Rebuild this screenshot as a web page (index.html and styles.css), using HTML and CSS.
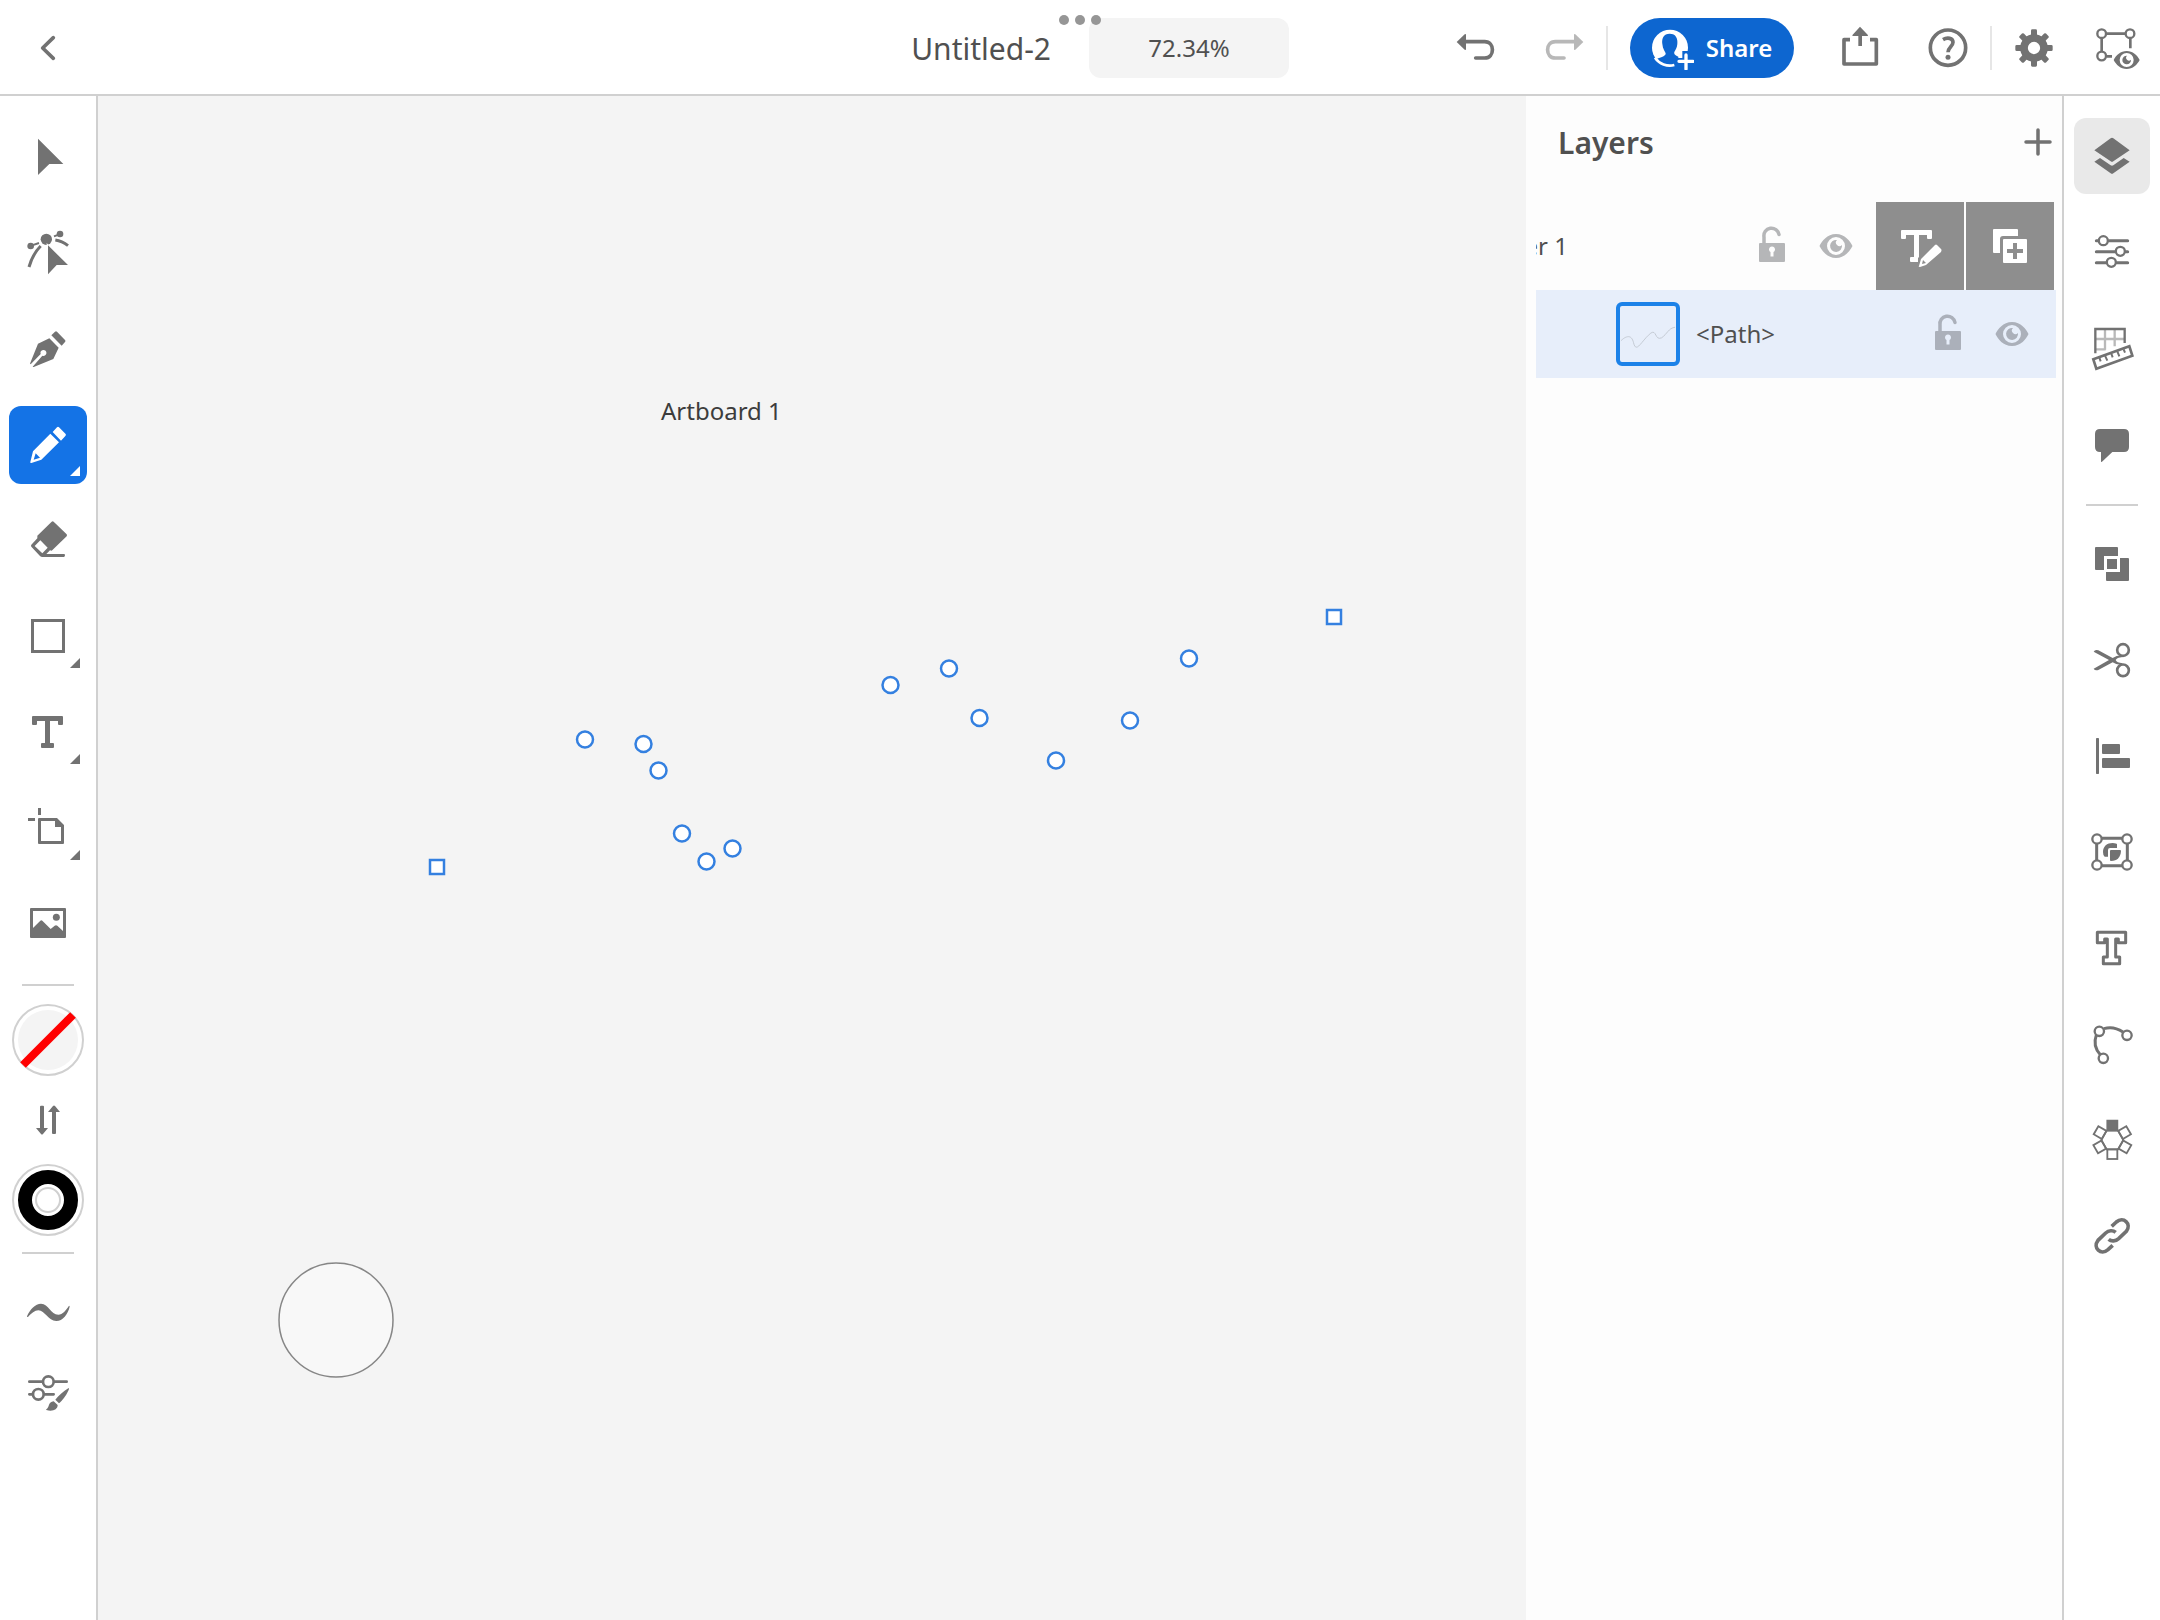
FILE: index.html
```html
<!DOCTYPE html>
<html lang="en">
<head>
<meta charset="utf-8">
<title>Untitled-2</title>
<meta name="viewport" content="width=device-width, initial-scale=1">
<link rel="stylesheet" href="styles.css">
</head>
<body>
<svg class="defs" aria-hidden="true">
  <symbol id="lock" viewBox="-24 -24 48 48">
    <path d="M-8-2V-9A7.500 7.500 0 0 1 7-11.500" fill="none" stroke="currentColor" stroke-width="3.500" stroke-linecap="round"/>
    <path fill="currentColor" fill-rule="evenodd" d="M-12-3H12Q13-3 13-2V15Q13 16 12 16H-12Q-13 16-13 15V-2Q-13-3-12-3ZM-1.500 6V10.500H1.500V6A3 3 0 1 0-1.500 6Z"/>
  </symbol>
  <symbol id="eye" viewBox="-24 -24 48 48">
    <path fill="currentColor" fill-rule="evenodd" d="M0-12C9-12 14-5 16.500 0C14 5 9 12 0 12C-9 12-14 5-16.500 0C-14-5-9-12 0-12ZM0-9A9 9 0 1 0 0 9A9 9 0 1 0 0-9Z"/>
    <path fill="currentColor" d="M1-6A6 6 0 1 0 6-1A3.200 3.200 0 1 1 1-6Z"/>
  </symbol>
</svg>

<div class="app">
  <header class="topbar">
    <div class="topbar-start">
      <button class="icon-btn back" aria-label="Back"><svg class="icon" viewBox="72 72 144 144"><path d="M160 113L128 144L160 175" class="line" stroke-width="11" stroke-linecap="round" stroke-linejoin="round"/></svg></button>
      <h1 class="doc-title">Untitled-2</h1>
    </div>
    <div class="topbar-end">
      <button class="zoom-level">72.34%</button>
      <div class="actions">
        <button class="icon-btn" aria-label="Undo"><svg class="icon" viewBox="69 72 144 144"><path class="line" stroke-width="11" stroke-linecap="round" d="M104 125H164C195 125 195 174 164 174H137"/><path d="M80 126L104 103Q108 101 108 105V147Q108 151 104 149Z"/></svg></button>
        <button class="icon-btn faded" aria-label="Redo" disabled><svg class="icon" viewBox="327 72 144 144"><path class="line" stroke-width="11" stroke-linecap="round" d="M436 125H376C345 125 345 174 376 174H402"/><path d="M460 126L436 103Q432 101 432 105V147Q432 151 436 149Z"/></svg></button>
        <span class="bar"></span>
        <button class="share">
          <svg class="share-icon" viewBox="666 78 126 132">
            <circle cx="720" cy="143" r="54" fill="#fff"/>
            <path class="share-cut" d="M719 101C738 101 744 116 742 132C741 144 736 150 733 156C731 163 737 167 745 170V210H666V182C690 172 708 170 707 160C705 154 698 146 697 132C695 115 701 101 719 101Z"/>
            <path d="M675 173A54 54 0 0 0 733 195" fill="none" stroke="#fff" stroke-width="8"/>
            <path class="share-cut" d="M757 153H778V174H800V195H778V216H756V195H735V174H757Z"/>
            <path d="M768 165V207M747 184H789" stroke="#fff" stroke-width="10" stroke-linecap="round"/>
          </svg>
          <span>Share</span>
        </button>
        <button class="icon-btn" aria-label="Export"><svg class="icon" viewBox="81 72 144 144"><path class="line" stroke-width="11" stroke-linejoin="round" d="M120 119H102V192H199V119H180"/><path d="M150 80L173 104Q176 108 172 108H156V138H145V108H129Q125 108 128 104Z"/></svg></button>
        <button class="icon-btn" aria-label="Help"><svg class="icon" viewBox="339 72 144 144"><circle cx="414" cy="143" r="53" class="line" stroke-width="11"/><path class="line" stroke-width="11" d="M399 119C412 111 429 114 429 127C429 139 414 142 414 157"/><circle cx="414" cy="172" r="7.500"/></svg></button>
        <span class="bar"></span>
        <button class="icon-btn narrow" aria-label="Settings"><svg class="icon" viewBox="600 72 144 144"><g transform="translate(672 144)"><circle r="30" class="line" stroke-width="23"/><path id="teeth" d="M-9-36V-52Q-9-56-5-56H5Q9-56 9-52V-36ZM-9 36V52Q-9 56-5 56H5Q9 56 9 52V36ZM-36-9H-52Q-56-9-56-5V5Q-56 9-52 9H-36ZM36-9H52Q56-9 56-5V5Q56 9 52 9H36Z"/><use href="#teeth" transform="rotate(45)"/></g></svg></button>
        <button class="icon-btn narrow" aria-label="View mode"><svg class="icon" viewBox="852 72 144 144"><path class="line" stroke-width="8" d="M890 101H946M875 116V153M961 116V145M890 169H906"/><g class="line" stroke-width="7"><circle cx="875" cy="101" r="13"/><circle cx="960" cy="101" r="13"/><circle cx="875" cy="168" r="13"/></g><path fill-rule="evenodd" d="M950 153C968 153 982 166 989 180C982 194 968 207 950 207C932 207 918 194 911 180C918 166 932 153 950 153ZM950 159A21 21 0 1 0 950 201A21 21 0 1 0 950 159Z"/><path d="M951 167A13 13 0 1 0 963 179A7 7 0 1 1 951 167Z"/></svg></button>
      </div>
    </div>
    <div class="grabber" aria-hidden="true"><i></i><i></i><i></i></div>
  </header>

  <nav class="rail tools" aria-label="Tools">
    <button class="tool" aria-label="Selection"><svg class="icon" viewBox="72 399 144 144"><path d="M114 416L190 492H148L114 525Z"/></svg></button>
    <button class="tool" aria-label="Direct selection"><svg class="icon" viewBox="72 687 144 144"><circle cx="139" cy="718" r="17"/><circle cx="92" cy="738" r="10"/><circle cx="180" cy="702" r="10"/><path class="line" stroke-width="6" d="M96 736L117 729M162 709L178 703"/><path class="line" stroke-width="9" d="M122 738Q98 762 87 801M166 720Q186 723 204 737"/><path d="M140 729L208 796H171L140 828Z" fill="#fff"/><path d="M144 736L204 795H170L144 823Z"/></svg></button>
    <button class="tool" aria-label="Pen"><svg class="icon" viewBox="72 975 144 144"><path d="M165 995Q168 992 171 995L195 1020Q198 1023 195 1026L185 1037L154 1006Z"/><path d="M148 1015L176 1043L160 1077L103 1100Q100 1102 98 1100L127 1067A9 9 0 1 0 122 1062L92 1093Q89 1091 91 1088L114 1031Z"/></svg></button>
    <button class="tool flyout active" aria-label="Pencil" aria-pressed="true"><svg class="icon" viewBox="72 1263 144 144"><path d="M171 1282Q174 1279 177 1282L197 1302Q199 1305 196 1308L183 1322L158 1296Z"/><path fill-rule="evenodd" d="M151 1301L177 1327L124 1379L94 1389Q90 1390 91 1386L99 1354ZM107 1360L101 1379L120 1373Z"/></svg></button>
    <button class="tool" aria-label="Eraser"><svg class="icon" viewBox="72 81 144 144"><path fill-rule="evenodd" d="M155 95Q158 92 161 95L200 133Q202 136 200 139L155 182L150 181L139 192H192Q195 192 195 196Q195 201 191 201H127Q123 201 120 198L94 170Q92 167 94 164L112 145V137ZM121 151L104 168L127 190L143 173Z"/></svg></button>
    <button class="tool flyout" aria-label="Rectangle"><svg class="icon" viewBox="72 369 144 144"><rect x="97.500" y="391.500" width="93" height="93" class="line" stroke-width="9"/></svg></button>
    <button class="tool flyout" aria-label="Type"><svg class="icon" viewBox="72 657 144 144"><path d="M99 678H186Q189 678 189 681V702Q189 705 186 705H177Q174 705 174 702V693H150V759H159Q162 759 162 762V771Q162 774 159 774H126Q123 774 123 771V762Q123 759 126 759H135V693H111V702Q111 705 108 705H99Q96 705 96 702V681Q96 678 99 678Z"/></svg></button>
    <button class="tool flyout" aria-label="Artboard"><svg class="icon" viewBox="72 945 144 144"><path d="M114 954H123V975H114ZM84 984H105V993H84Z"/><path fill-rule="evenodd" d="M117 984H171L192 1005V1058Q192 1062 189 1062H117Q114 1062 114 1059V987Q114 984 117 984ZM123 993V1053H183V1011H165V993Z"/></svg></button>
    <button class="tool" aria-label="Place image"><svg class="icon" viewBox="72 1233 144 144"><path fill-rule="evenodd" d="M93 1254H195Q198 1254 198 1257V1341Q198 1344 195 1344H93Q90 1344 90 1341V1257Q90 1254 93 1254ZM99 1263V1314L121 1292Q124 1289 127 1292L152 1317L164 1307Q168 1304 172 1307L189 1323V1263Z"/><circle cx="169" cy="1282" r="10.500"/></svg></button>
    <hr class="rule first">
    <button class="swatch" aria-label="Fill: none"><svg viewBox="0 0 72 72"><circle cx="36" cy="36" r="35" fill="#fff" stroke="#d0d0d0" stroke-width="2"/><circle cx="36" cy="36" r="30" fill="#f4f4f4"/><path d="M11 61L61 11" stroke="#f00" stroke-width="8"/></svg></button>
    <button class="swap" aria-label="Swap fill and stroke"><svg class="icon" viewBox="72 408 144 144"><path d="M120 440Q120 437 123 437H129Q132 437 132 440V504H144L129 522Q126 525 123 522L108 504H120ZM156 519Q156 522 159 522H165Q168 522 168 519V456H180L165 438Q162 435 159 438L144 456H156Z"/></svg></button>
    <button class="swatch" aria-label="Stroke: black"><svg viewBox="0 0 72 72"><circle cx="36" cy="36" r="35" fill="#fff" stroke="#d0d0d0" stroke-width="2"/><circle cx="36" cy="36" r="23" fill="#fff" stroke="#000" stroke-width="14"/><circle cx="36" cy="36" r="12" fill="#fff" stroke="#d0d0d0" stroke-width="2"/></svg></button>
    <hr class="rule second">
    <button class="option" aria-label="Smoothing"><svg class="icon" viewBox="72 984 144 144"><path d="M81 1069C90 1048 106 1031 123 1031C146 1031 152 1064 175 1064C188 1064 198 1050 207 1037Q209 1037 209 1040C204 1062 188 1083 169 1083C144 1083 135 1051 115 1051C104 1051 95 1060 84 1071Q81 1072 81 1069Z"/></svg></button>
    <button class="option" aria-label="Brush settings"><svg class="icon" viewBox="72 1224 144 144"><path class="line" stroke-width="8" stroke-linecap="round" d="M88 1265H127M163 1265H200M88 1303H97M133 1303H161"/><g class="line" stroke-width="8"><circle cx="145" cy="1265" r="16"/><circle cx="115" cy="1303" r="16"/></g><path d="M206 1284Q208 1285 206 1290C197 1310 187 1321 177 1330L166 1319C175 1307 189 1295 206 1284ZM161 1324L173 1335C173 1349 157 1356 139 1350Q137 1348 140 1347C148 1344 144 1325 161 1324Z"/></svg></button>
  </nav>

  <main class="canvas">
    <svg class="artwork" aria-label="Path anchors">
      <g fill="#fff" stroke="#3480e0" stroke-width="2.500">
        <rect x="332" y="764" width="14" height="14"/>
        <circle cx="487" cy="643.500" r="8"/><circle cx="545.500" cy="648" r="8"/><circle cx="560.500" cy="674.500" r="8"/>
        <circle cx="584" cy="737.500" r="8"/><circle cx="608.500" cy="765.500" r="8"/><circle cx="634.500" cy="752.500" r="8"/>
        <circle cx="792.500" cy="589" r="8"/><circle cx="851" cy="572.500" r="8"/><circle cx="881.500" cy="622" r="8"/>
        <circle cx="958" cy="664.500" r="8"/><circle cx="1032" cy="624.500" r="8"/><circle cx="1091" cy="562.500" r="8"/>
        <rect x="1229" y="514" width="14" height="14"/>
      </g>
      <circle cx="238" cy="1224" r="57" fill="#f8f8f8" stroke="#868686" stroke-width="1.500"/>
    </svg>
    <span class="artboard-label">Artboard 1</span>
  </main>

  <aside class="panel" aria-label="Layers">
    <div class="panel-head">
      <h2>Layers</h2>
      <button class="add" aria-label="Add layer"><svg viewBox="0 0 28 28"><path class="line" stroke-width="3.500" stroke-linecap="round" d="M14 2V26M2 14H26"/></svg></button>
    </div>
    <div class="layer swiped">
      <span class="layer-name clipped"><span>Layer 1</span></span>
      <button class="mini" aria-label="Lock layer"><svg class="icon"><use href="#lock"/></svg></button>
      <button class="mini" aria-label="Hide layer"><svg class="icon"><use href="#eye"/></svg></button>
      <div class="swipe-actions">
        <button aria-label="Rename"><svg class="icon" viewBox="-24 -24 48 48"><path d="M-19-16H11Q12-16 12-15V-8Q12-7 11-7H8Q7-7 7-8V-11H-1V11L-2 12V16H-9Q-10 16-10 15V12Q-10 11-9 11H-6V-11H-14V-8Q-14-7-15-7H-18Q-19-7-19-8V-15Q-19-16-18-16Z"/><path fill-rule="evenodd" d="M15-1Q16-2 17-1L21 3Q22 4 21 6L6 19L0 21Q-2 21-1 20L1 13ZM3 14L2 18L6 17Z"/></svg></button>
        <button aria-label="Duplicate"><svg class="icon" viewBox="-24 -24 48 48"><path d="M-16-17H7Q8-17 8-16V-10H-7Q-10-10-10-7V7H-16Q-17 7-17 6V-16Q-17-17-16-17Z"/><path fill-rule="evenodd" d="M-6-7H16Q17-7 17-6V16Q17 17 16 17H-6Q-7 17-7 16V-6Q-7-7-6-7ZM3-3V3H-3V7H3V13H7V7H13V3H7V-3Z"/></svg></button>
      </div>
    </div>
    <div class="layer selected">
      <span class="thumb"><svg viewBox="0 0 58 58"><path d="M1 36C6 31 12 29 14 38C17 50 22 36 32 28C38 24 36 36 43 33C49 29 50 23 57 22" fill="none" stroke="#c3c9d2"/></svg></span>
      <span class="layer-name">&lt;Path&gt;</span>
      <button class="mini" aria-label="Lock path"><svg class="icon"><use href="#lock"/></svg></button>
      <button class="mini" aria-label="Hide path"><svg class="icon"><use href="#eye"/></svg></button>
    </div>
  </aside>

  <nav class="rail panels" aria-label="Panels">
    <button class="tab active" aria-label="Layers" aria-pressed="true"><svg class="icon" viewBox="114 96 144 144"><path d="M182 115Q186 112 190 115L239 151L190 184Q186 187 182 184L133 151Z"/><path d="M133 185L150 174L182 196Q186 198 190 196L221 174L239 185L190 220Q186 223 182 220Z"/></svg></button>
    <button class="tab" aria-label="Properties"><svg class="icon" viewBox="114 384 144 144"><path class="line" stroke-width="9" stroke-linecap="round" d="M139 422H145M177 422H233M139 455H195M227 455H233M139 488H168M201 488H233"/><g class="line" stroke-width="7"><circle cx="160" cy="422" r="13.500"/><circle cx="211" cy="454" r="13.500"/><circle cx="184" cy="487" r="13.500"/></g></svg></button>
    <button class="tab" aria-label="Precision"><svg class="icon" viewBox="114 672 144 144"><path fill="none" stroke="#b9b9b9" stroke-width="7" d="M165 690V749M194 690V739M137 717H223M137 748H167"/><path class="line" stroke-width="7" d="M136 760V687H224V729"/><g class="line" stroke-width="8"><path d="M130 778L238 739L247 767L139 806Z"/><path stroke-width="6" d="M148 773L152 784M165 767L172 782M184 761L188 772M202 754L208 769M221 748L225 758"/></g></svg></button>
    <button class="tab" aria-label="Comments"><svg class="icon" viewBox="114 960 144 144"><path d="M150 987H222Q237 987 237 1002V1041Q237 1056 222 1056H187L156 1085Q153 1088 153 1084V1056H150Q135 1056 135 1041V1002Q135 987 150 987Z"/></svg></button>
    <hr class="rule">
    <button class="tab" aria-label="Combine shapes"><svg class="icon" viewBox="114 90 144 144"><path d="M138 111H201Q204 111 204 114V138H162V180H138Q135 180 135 177V114Q135 111 138 111ZM210 144H234Q237 144 237 147V210Q237 213 234 213H171Q168 213 168 210V186H210ZM171 147H201V177H171Z"/></svg></button>
    <button class="tab" aria-label="Edit"><svg class="icon" viewBox="114 378 144 144"><g class="line" stroke-width="8"><circle cx="219" cy="420" r="17.500"/><circle cx="219" cy="481" r="17.500"/></g><path d="M131 425Q135 417 145 421L188 444Q199 436 214 436L218 441Q200 443 197 450Q200 458 218 460L214 465Q199 465 188 457L145 480Q135 483 131 476L177 450Z"/></svg></button>
    <button class="tab" aria-label="Align"><svg class="icon" viewBox="114 666 144 144"><rect x="138" y="684" width="9" height="108" rx="2"/><rect x="156" y="702" width="54" height="30" rx="3"/><rect x="156" y="744" width="84" height="30" rx="3"/></svg></button>
    <button class="tab" aria-label="Object"><svg class="icon" viewBox="114 954 144 144"><path class="line" stroke-width="9" d="M155 985H217M155 1067H217M140 1000V1051M232 1000V1051"/><g class="line" stroke-width="7"><circle cx="141" cy="987" r="14"/><circle cx="231" cy="987" r="14"/><circle cx="141" cy="1065" r="14"/><circle cx="231" cy="1065" r="14"/></g><path d="M159 1026C159 1009 171 999 188 999Q200 1000 201 1003V1014H180Q174 1014 174 1020V1040H164Q159 1037 159 1026Z"/><path d="M183 1020H210Q213 1020 213 1023C212 1041 202 1053 183 1053Q180 1053 180 1050V1023Q180 1020 183 1020Z"/></svg></button>
    <button class="tab" aria-label="Type"><svg class="icon" viewBox="114 72 144 144"><path class="line" stroke-width="9" stroke-linejoin="round" d="M142 97H227V128H205V117H197V171H209V191H160V171H172V117H164V128H142Z"/></svg></button>
    <button class="tab" aria-label="Path"><svg class="icon" viewBox="114 360 144 144"><path class="line" stroke-width="9" d="M162 386Q190 377 219 396M139 405Q127 438 151 464"/><g class="line" stroke-width="7"><circle cx="148" cy="394" r="14"/><circle cx="231" cy="406" r="14"/><circle cx="160" cy="475" r="14"/></g></svg></button>
    <button class="tab" aria-label="Repeat"><svg class="icon" viewBox="114 648 144 144"><g transform="translate(187 720)" class="line" stroke-width="5.500"><path d="M-17-28H17L33 0L17 28H-17L-33 0Z"/><rect x="-15" y="-58" width="30" height="29" class="solid"/><rect x="-15" y="28" width="30" height="29"/><rect x="-15" y="-57" width="28" height="28" transform="rotate(60)"/><rect x="-15" y="-57" width="28" height="28" transform="rotate(120)"/><rect x="-13" y="-57" width="28" height="28" transform="rotate(240)"/><rect x="-13" y="-57" width="28" height="28" transform="rotate(300)"/></g></svg></button>
    <button class="tab" aria-label="Link"><svg class="icon" viewBox="114 936 144 144"><g class="line" stroke-width="11"><path d="M185 979L199 966C220 948 246 971 229 994L206 1016C197 1024 184 1025 176 1018"/><path d="M188 1036L174 1049C153 1067 127 1044 144 1021L167 999C176 991 189 990 197 997"/></g></svg></button>
  </nav>
</div>
</body>
</html>
```
FILE: styles.css
```css
*, *::before, *::after { box-sizing: border-box; }

body {
  margin: 0;
  background: #fff;
  color: #505050;
  font-family: "Noto Sans", "Open Sans", sans-serif;
  font-size: 24px;
  line-height: 32px;
}

button {
  display: flex;
  flex: none;
  align-items: center;
  justify-content: center;
  padding: 0;
  border: 0;
  background: none;
  color: inherit;
  font: inherit;
}

h1, h2 { margin: 0; }
svg { display: block; fill: currentColor; }
.defs { display: none; }
.icon { width: 48px; height: 48px; overflow: visible; }
.line { fill: none; stroke: currentColor; }
.solid { fill: currentColor; }

.app {
  display: grid;
  grid-template: 96px 1fr / 98px 1fr 536px 98px;
  min-height: 100vh;
}

/* Top bar */
.topbar {
  position: relative;
  grid-column: 1 / -1;
  display: grid;
  grid-template-columns: 1fr 1fr;
  box-shadow: inset 0 -2px #d0d0d0;
}
.topbar-start, .topbar-end {
  display: flex;
  align-items: center;
  justify-content: space-between;
}
.topbar-start { padding-right: 29px; }
.topbar-end { padding-left: 9px; }
.doc-title { padding-top: 2px; font-size: 30px; font-weight: 400; line-height: 40px; }
.zoom-level {
  width: 200px;
  height: 60px;
  border-radius: 12px;
  background: #f4f4f4;
}
.actions { display: flex; align-items: center; }
.icon-btn { width: 86px; height: 92px; color: #727272; }
.icon-btn.back { width: 96px; }
.icon-btn.narrow { width: 84px; }
.icon-btn.faded { color: #b8b8b8; }
.bar { width: 2px; height: 44px; background: #e6e6e6; }
.share {
  gap: 12px;
  width: 164px;
  height: 60px;
  margin: 0 24px 0 22px;
  border-radius: 30px;
  background: #0d66d0;
  color: #fff;
  font-weight: 600;
}
.share-icon { width: 42px; height: 44px; }
.share-cut { fill: #0d66d0; }
.grabber {
  position: absolute;
  top: 15px;
  left: 50%;
  display: flex;
  gap: 6px;
  transform: translateX(-50%);
}
.grabber i { width: 10px; height: 10px; border-radius: 50%; background: #969696; }

/* Side rails */
.rail {
  display: flex;
  flex-direction: column;
  align-items: center;
  color: #727272;
}
.rule { flex: none; width: 52px; height: 2px; margin: 0; border: 0; background: #d0d0d0; }

.tools { padding-top: 13px; border-right: 2px solid #d0d0d0; }
.tool { position: relative; width: 78px; height: 78px; margin: 9px 0; border-radius: 12px; }
.tool.active { background: #1473e6; color: #fff; }
.flyout::after {
  content: "";
  position: absolute;
  right: 7px;
  bottom: 8px;
  width: 10px;
  height: 10px;
  background: currentColor;
  clip-path: polygon(100% 0, 100% 100%, 0 100%);
}
.rule.first { margin: 11px 0 18px; }
.rule.second { margin: 16px 0 18px; }
.swatch, .swatch svg { width: 72px; height: 72px; }
.swap { width: 78px; height: 88px; }
.option { width: 78px; height: 80px; }

.panels { padding-top: 12px; border-left: 2px solid #d0d0d0; }
.tab { width: 76px; height: 76px; margin: 10px 0; border-radius: 12px; }
.tab.active { background: #e9e9e9; }
.panels .rule { margin: 12px 0 10px; }

/* Canvas */
.canvas { position: relative; overflow: hidden; background: #f4f4f4; }
.artwork { position: absolute; inset: 0; width: 100%; height: 100%; }
.artboard-label { position: absolute; top: 299px; left: 563px; color: #3c3c3c; }

/* Layers panel */
.panel { background: #fdfdfd; }
.panel-head {
  display: flex;
  align-items: center;
  justify-content: space-between;
  height: 92px;
  margin-bottom: 14px;
  padding: 0 10px 0 32px;
}
.panel-head h2 { padding-top: 2px; font-size: 30px; font-weight: 600; line-height: 40px; }
.add, .add svg { width: 28px; height: 28px; color: #727272; }
.layer {
  display: flex;
  align-items: center;
  height: 88px;
  margin: 0 6px 0 10px;
}
.layer.swiped { margin-right: 8px; }
.layer.selected { padding: 0 12px 0 80px; background: #e7eefa; }
.layer-name { flex: 1; }
.layer-name.clipped { display: flex; overflow: hidden; justify-content: flex-end; margin-right: 172px; white-space: nowrap; }
.mini { width: 64px; height: 64px; color: #b5b6b8; }
.selected .mini { color: #abb0ba; }
.swipe-actions { display: flex; gap: 2px; margin-left: 8px; }
.swipe-actions button { width: 88px; height: 88px; background: #8e8e8e; color: #fff; }
.thumb {
  width: 64px;
  height: 64px;
  margin-right: 16px;
  border: 4px solid #1c82e8;
  border-radius: 6px;
}
.thumb svg { width: 56px; height: 56px; }
```
